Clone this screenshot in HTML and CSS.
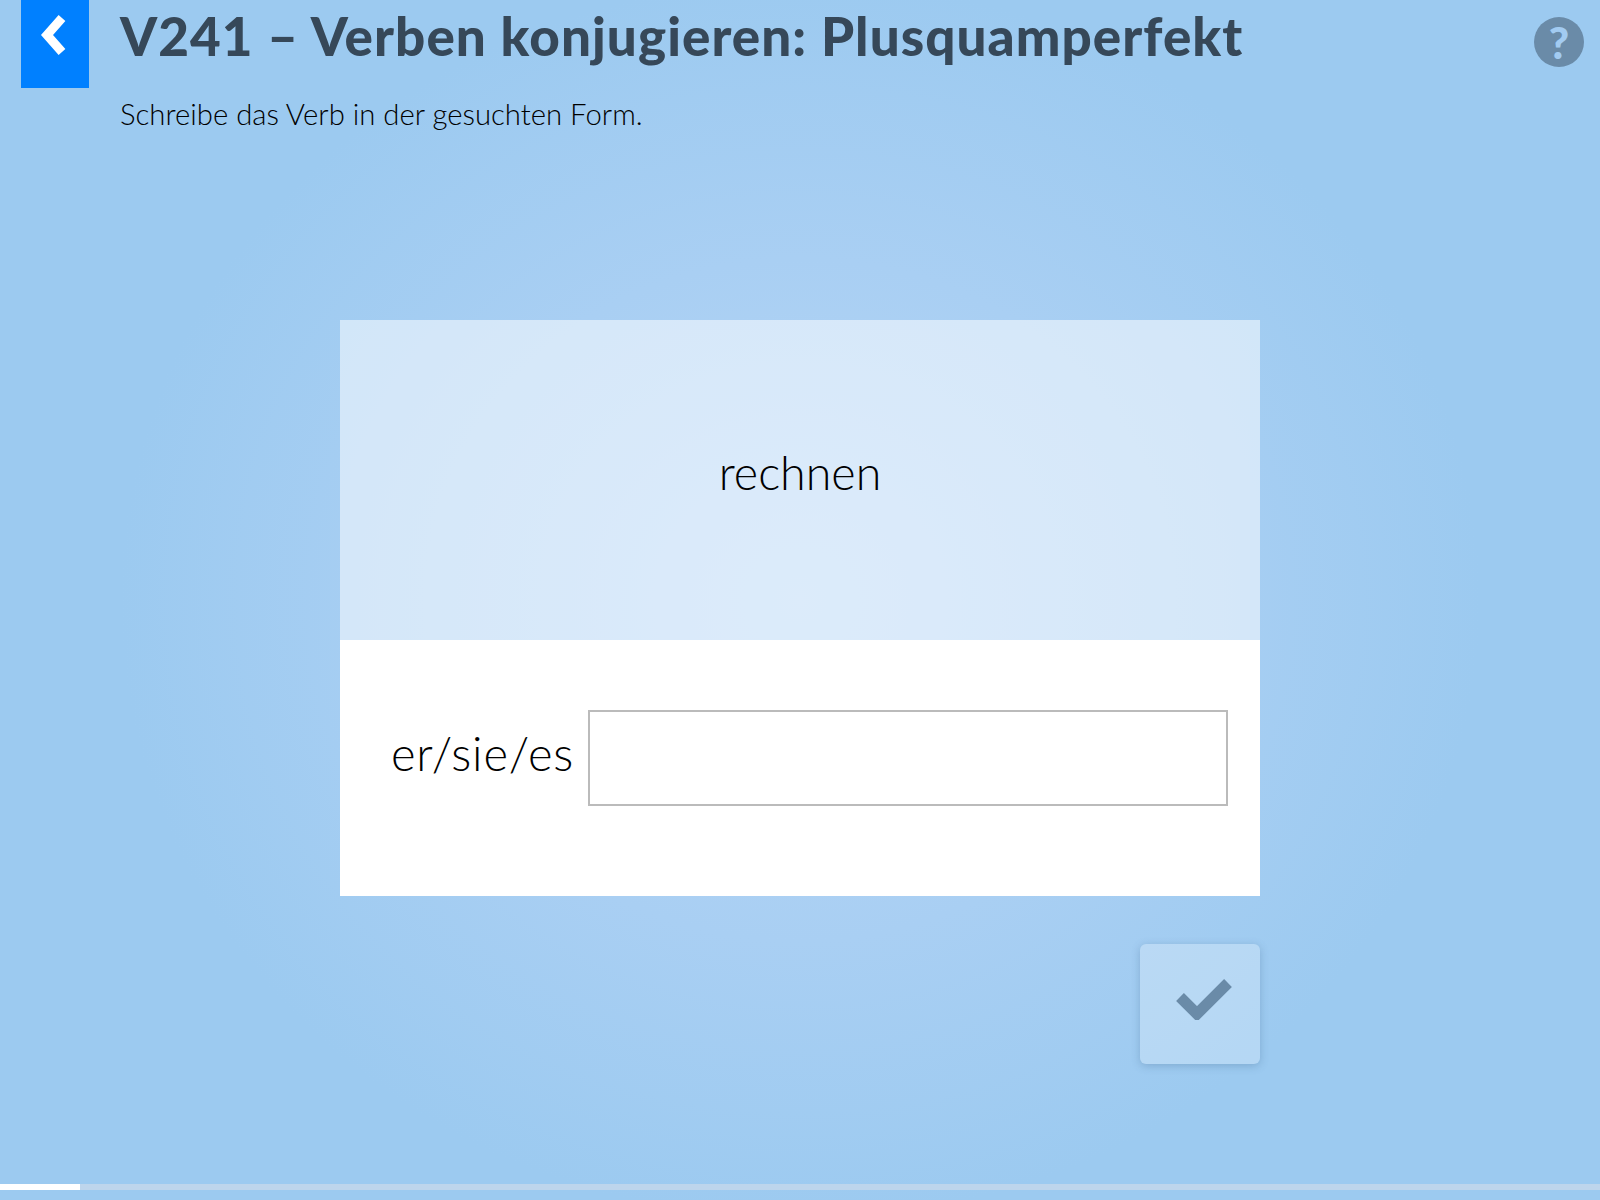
FILE: index.html
```html
<!DOCTYPE html>
<html lang="de">
<head>
<meta charset="utf-8">
<title>V241</title>
<link rel="stylesheet" href="styles.css">
</head>
<body>
<div class="page">
  <header class="header">
    <a class="back"><svg width="30" height="40" viewBox="0 0 30 40"><path d="M23 3 L8 20 L23 37" fill="none" stroke="#fff" stroke-width="9"/></svg></a>
    <div class="heading">
      <h1 class="title">V241 – Verben konjugieren: Plusquamperfekt</h1>
      <p class="subtitle">Schreibe das Verb in der gesuchten Form.</p>
    </div>
    <div class="help">?</div>
  </header>
  <main class="main">
    <section class="card">
      <div class="prompt">rechnen</div>
      <div class="answer">
        <label class="label">er/sie/es</label>
        <input class="input" type="text">
      </div>
    </section>
    <div class="actions">
      <button class="check"><svg width="56" height="44" viewBox="0 0 56 44"><path d="M4 21 L21 38 L52 7" fill="none" stroke="#6a8ba8" stroke-width="11"/></svg></button>
    </div>
  </main>
  <div class="progress"><div class="progress-fill"></div></div>
</div>
</body>
</html>
```
FILE: styles.css
```css
* { box-sizing: border-box; }
html, body { margin: 0; height: 100%; }
body { font-family: "Lato", "Liberation Sans", sans-serif; }
.page {
  width: 1600px; height: 1200px; overflow: hidden;
  display: flex; flex-direction: column;
  background: radial-gradient(ellipse 680px 620px at 800px 600px, #b6d6f5 0%, #a9cff3 55%, #9ccaf0 100%);
}
.header { display: flex; align-items: flex-start; height: 320px; padding-left: 21px; padding-right: 16px; }
.back { width: 68px; height: 88px; background: #0080ff; display: flex; align-items: flex-start; justify-content: center; padding-top: 15px; padding-right: 2px; }
.heading { flex: 1; margin-left: 31px; }
.title { margin: 5px 0 0; font-size: 53px; line-height: 62px; font-weight: 900; color: #364859; letter-spacing: 1.05px; }
.subtitle { margin: 29px 0 0; font-size: 29.3px; line-height: 36px; font-weight: 300; color: #000; }
.help { width: 50px; height: 50px; margin-top: 17px; border-radius: 50%; background: #6a8ba8; color: #a2cbf1; font-size: 44px; font-weight: 900; line-height: 50px; text-align: center; }
.main { flex: 1; display: flex; flex-direction: column; align-items: center; }
.card { width: 920px; }
.prompt { height: 320px; background: rgba(255,255,255,.52); display: flex; align-items: center; justify-content: center; padding-bottom: 16px; font-size: 46.6px; font-weight: 300; color: #000; }
.answer { height: 256px; background: #fff; display: flex; align-items: flex-start; padding: 70px 32px 0 0; }
.label { width: 234px; margin-right: 14px; text-align: right; font-size: 47px; line-height: 86px; font-weight: 300; letter-spacing: 0.8px; color: #000; }
.input { flex: 1; height: 96px; border: 2px solid #bbb; background: #fff; outline: none; }
.actions { width: 920px; display: flex; justify-content: flex-end; margin-top: 48px; }
.check { width: 120px; height: 120px; padding: 0; border: 0; border-radius: 6px; background: rgba(255,255,255,.25); box-shadow: 0 2px 8px rgba(60,100,140,.3); display: flex; align-items: center; justify-content: center; }
.check svg { margin: 0 0 12px 8px; }
.progress { height: 6px; margin-bottom: 10px; background: #bdd5ec; }
.progress-fill { width: 80px; height: 100%; background: #fff; }
```
